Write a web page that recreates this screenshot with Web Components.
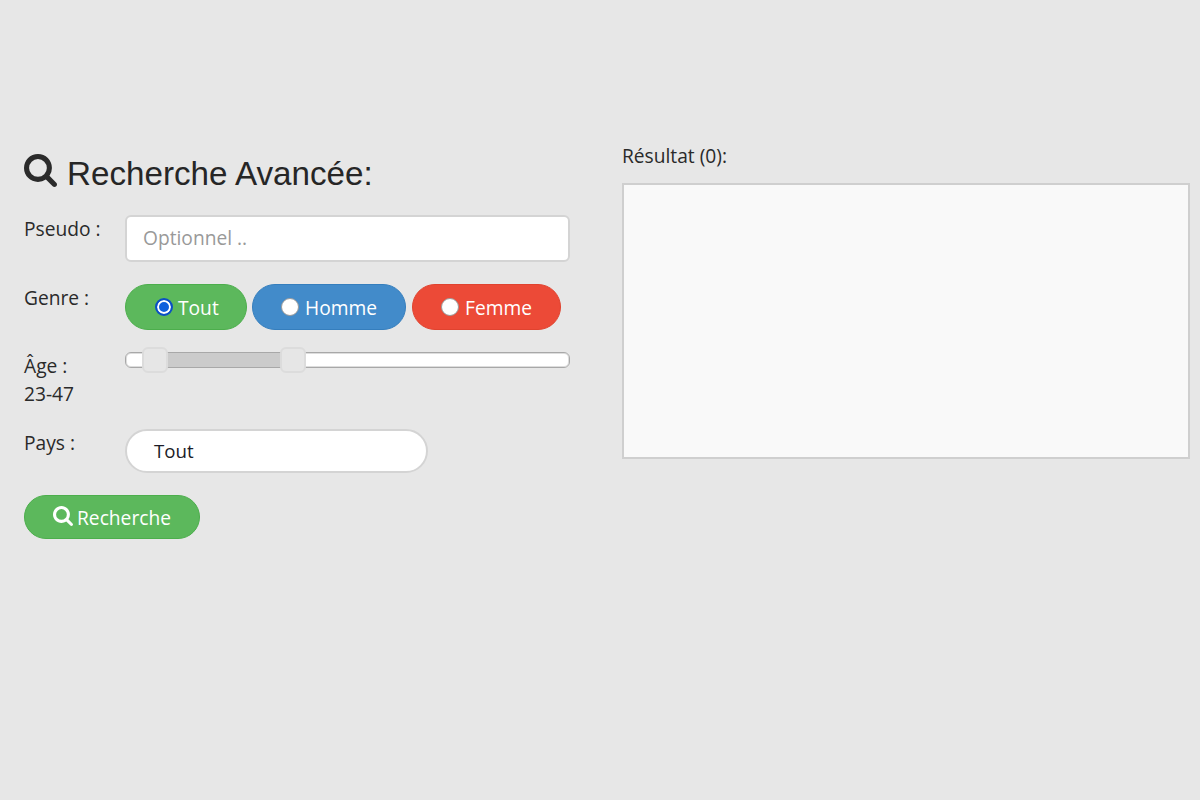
<!DOCTYPE html>
<html lang="fr">
<head>
<meta charset="utf-8">
<title>Recherche Avancée</title>
<style>
  html, body { margin: 0; height: 100%; background: #e7e7e7; }
  body { font-family: "Open Sans", sans-serif; font-size: 19.2px; color: #2a2a2a; }
</style>
</head>
<body>
<search-page>
  <search-form>
    <form-row label="Pseudo :"><text-field placeholder="Optionnel .."></text-field></form-row>
    <form-row label="Genre :">
      <gender-pill color="green" checked>Tout</gender-pill>
      <gender-pill color="blue">Homme</gender-pill>
      <gender-pill color="red">Femme</gender-pill>
    </form-row>
    <form-row label="Âge :" sub="23-47" tight><age-slider></age-slider></form-row>
    <form-row label="Pays :"><country-select>Tout</country-select></form-row>
    <search-button>Recherche</search-button>
  </search-form>
  <result-panel></result-panel>
</search-page>

<script>
const SEARCH_ICON = 'M1152 704q0-185-131.5-316.5t-316.5-131.5-316.5 131.5-131.5 316.5 131.5 316.5 316.5 131.5 316.5-131.5 131.5-316.5zm512 832q0 52-38 90t-90 38q-54 0-90-38l-343-342q-179 124-399 124-143 0-273.5-55.5t-225-150-150-225-55.5-273.5 55.5-273.5 150-225 225-150 273.5-55.5 273.5 55.5 225 150 150 225 55.5 273.5q0 220-124 399l343 343q37 37 37 90z';

class SearchPage extends HTMLElement {
  constructor() {
    super();
    this.attachShadow({mode: 'open'}).innerHTML = `
      <style>
        :host {
          display: grid;
          grid-template-columns: 546px 568px;
          column-gap: 52px;
          padding: 142px 10px 0 24px;
        }
      </style>
      <slot></slot>`;
  }
}

class SearchForm extends HTMLElement {
  constructor() {
    super();
    this.attachShadow({mode: 'open'}).innerHTML = `
      <style>
        :host { display: block; padding-top: 13px; }
        h1 {
          display: flex;
          align-items: flex-start;
          gap: 10px;
          margin: 0 0 27px;
          height: 33px;
          font: 400 33.2px/37px "Liberation Sans", Arial, sans-serif;
          color: #262626;
        }
        svg { width: 33px; height: 33px; margin-top: -1px; fill: #2b2b2b; }
      </style>
      <h1><svg viewBox="0 0 1664 1664"><path d="${SEARCH_ICON}"/></svg><span>Recherche Avancée:</span></h1>
      <slot></slot>`;
  }
}

class FormRow extends HTMLElement {
  constructor() {
    super();
    const sub = this.getAttribute('sub');
    this.attachShadow({mode: 'open'}).innerHTML = `
      <style>
        :host { display: flex; margin-bottom: 22px; }
        :host([tight]) { margin-bottom: 21px; }
        .label { flex: 0 0 101px; line-height: 28px; }
        .field { flex: 1; display: flex; gap: 5.5px; align-items: flex-start; min-width: 0; }
      </style>
      <div class="label">${this.getAttribute('label')}${sub ? '<br>' + sub : ''}</div>
      <div class="field"><slot></slot></div>`;
  }
}

class TextField extends HTMLElement {
  constructor() {
    super();
    this.attachShadow({mode: 'open'}).innerHTML = `
      <style>
        :host { display: block; flex: 1; }
        input {
          display: block;
          box-sizing: border-box;
          width: 100%;
          height: 47px;
          padding: 0 16px 2px;
          border: 2px solid #d4d4d4;
          border-radius: 6px;
          background: #fff;
          font: 19.2px "Open Sans", sans-serif;
          outline: none;
        }
        input::placeholder { color: #999; opacity: 1; }
      </style>
      <input type="text" placeholder="${this.getAttribute('placeholder')}">`;
  }
}

class GenderPill extends HTMLElement {
  constructor() {
    super();
    this.attachShadow({mode: 'open'}).innerHTML = `
      <style>
        :host {
          display: inline-flex;
          box-sizing: border-box;
          height: 46px;
          padding-left: 28px;
          border: 1px solid;
          border-radius: 23px;
          color: #fff;
        }
        :host([color=green]) { width: 121.5px; padding-left: 28.5px; background: #5cb85c; border-color: #4cae4c; }
        :host([color=blue]) { width: 154px; background: #428bca; border-color: #357ebd; }
        :host([color=red]) { width: 149.5px; padding-left: 28.5px; background: #ec4a37; border-color: #e0432f; }
        label { display: flex; align-items: center; gap: 6px; }
        :host([color=green]) label { gap: 5.5px; }
        .dot {
          box-sizing: border-box;
          width: 18px;
          height: 18px;
          margin-top: -1px;
          border-radius: 50%;
          background: #fff;
          border: 1px solid #9a9a9a;
        }
        :host([checked]) .dot {
          border: 2px solid #0b4fc4;
          box-shadow: inset 0 0 0 2px #fff;
          background: #0f5fdc;
        }
        .text { margin-top: 1px; }
      </style>
      <label><span class="dot"></span><span class="text"><slot></slot></span></label>`;
  }
}

class AgeSlider extends HTMLElement {
  constructor() {
    super();
    this.attachShadow({mode: 'open'}).innerHTML = `
      <style>
        :host {
          display: block;
          position: relative;
          flex: 1;
          box-sizing: border-box;
          height: 16px;
          margin: 0;
          border: 1px solid #a8a8a8;
          border-radius: 6px;
          background: #fff;
          box-shadow: inset 0 0 0 1px rgba(170, 170, 170, .4);
        }
        .range { position: absolute; left: 29px; width: 138px; top: 0; bottom: 0; background: #cbcbcb; }
        .handle {
          position: absolute;
          top: -6px;
          box-sizing: border-box;
          width: 26px;
          height: 26px;
          border: 2px solid #dcdcdc;
          border-radius: 6px;
          background: #e6e6e6;
        }
      </style>
      <div class="range"></div>
      <div class="handle" style="left: 16px"></div>
      <div class="handle" style="left: 154px"></div>`;
  }
}

class CountrySelect extends HTMLElement {
  constructor() {
    super();
    this.attachShadow({mode: 'open'}).innerHTML = `
      <style>
        :host {
          display: block;
          box-sizing: border-box;
          width: 303px;
          height: 44px;
          padding-left: 27px;
          border: 2px solid #d4d4d4;
          border-radius: 22px;
          background: #fff;
          color: #1c1c28;
          font-size: 18.7px;
          line-height: 40px;
        }
      </style>
      <slot></slot>`;
  }
}

class SearchButton extends HTMLElement {
  constructor() {
    super();
    this.attachShadow({mode: 'open'}).innerHTML = `
      <style>
        :host {
          display: inline-flex;
          align-items: center;
          justify-content: center;
          gap: 4px;
          box-sizing: border-box;
          width: 176px;
          height: 44px;
          border: 1px solid #4cae4c;
          border-radius: 22px;
          background: #5cb85c;
          color: #fff;
        }
        svg { width: 20px; height: 20px; fill: #fff; margin-top: -2px; }
      </style>
      <svg viewBox="0 0 1664 1664"><path d="${SEARCH_ICON}"/></svg><span><slot></slot></span>`;
  }
}

class ResultPanel extends HTMLElement {
  constructor() {
    super();
    this.attachShadow({mode: 'open'}).innerHTML = `
      <style>
        :host { display: block; }
        .title { line-height: 28px; margin-bottom: 13px; }
        .box {
          box-sizing: border-box;
          height: 276px;
          border: 2px solid #cfcfcf;
          background: #f9f9f9;
        }
      </style>
      <div class="title">Résultat (0):</div>
      <div class="box"></div>`;
  }
}

customElements.define('search-page', SearchPage);
customElements.define('search-form', SearchForm);
customElements.define('form-row', FormRow);
customElements.define('text-field', TextField);
customElements.define('gender-pill', GenderPill);
customElements.define('age-slider', AgeSlider);
customElements.define('country-select', CountrySelect);
customElements.define('search-button', SearchButton);
customElements.define('result-panel', ResultPanel);
</script>
</body>
</html>
